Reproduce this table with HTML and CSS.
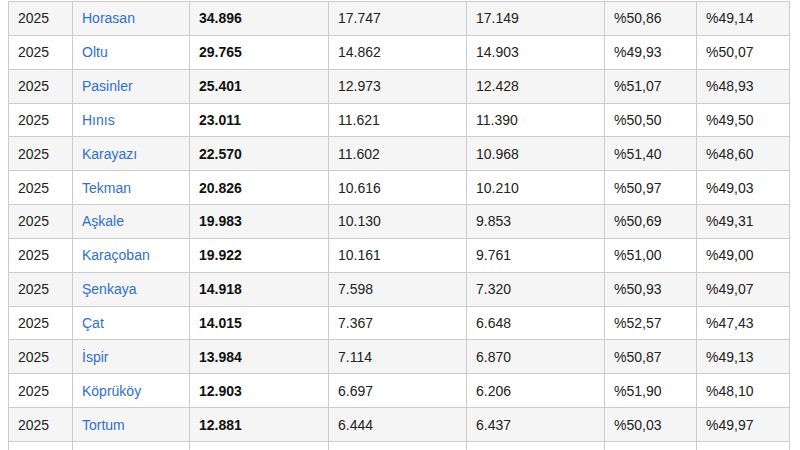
FILE: index.html
```html
<!DOCTYPE html>
<html lang="tr">
<head>
<meta charset="utf-8">
<title>Nüfus</title>
<link rel="stylesheet" href="styles.css">
</head>
<body>
<table class="pop">
<colgroup>
<col class="c1"><col class="c2"><col class="c3"><col class="c4"><col class="c5"><col class="c6"><col class="c7">
</colgroup>
<tbody>
<tr><td>2025</td><td><a href="#">Horasan</a></td><td class="b">34.896</td><td>17.747</td><td>17.149</td><td>%50,86</td><td>%49,14</td></tr>
<tr><td>2025</td><td><a href="#">Oltu</a></td><td class="b">29.765</td><td>14.862</td><td>14.903</td><td>%49,93</td><td>%50,07</td></tr>
<tr><td>2025</td><td><a href="#">Pasinler</a></td><td class="b">25.401</td><td>12.973</td><td>12.428</td><td>%51,07</td><td>%48,93</td></tr>
<tr><td>2025</td><td><a href="#">Hınıs</a></td><td class="b">23.011</td><td>11.621</td><td>11.390</td><td>%50,50</td><td>%49,50</td></tr>
<tr><td>2025</td><td><a href="#">Karayazı</a></td><td class="b">22.570</td><td>11.602</td><td>10.968</td><td>%51,40</td><td>%48,60</td></tr>
<tr><td>2025</td><td><a href="#">Tekman</a></td><td class="b">20.826</td><td>10.616</td><td>10.210</td><td>%50,97</td><td>%49,03</td></tr>
<tr><td>2025</td><td><a href="#">Aşkale</a></td><td class="b">19.983</td><td>10.130</td><td>9.853</td><td>%50,69</td><td>%49,31</td></tr>
<tr><td>2025</td><td><a href="#">Karaçoban</a></td><td class="b">19.922</td><td>10.161</td><td>9.761</td><td>%51,00</td><td>%49,00</td></tr>
<tr><td>2025</td><td><a href="#">Şenkaya</a></td><td class="b">14.918</td><td>7.598</td><td>7.320</td><td>%50,93</td><td>%49,07</td></tr>
<tr><td>2025</td><td><a href="#">Çat</a></td><td class="b">14.015</td><td>7.367</td><td>6.648</td><td>%52,57</td><td>%47,43</td></tr>
<tr><td>2025</td><td><a href="#">İspir</a></td><td class="b">13.984</td><td>7.114</td><td>6.870</td><td>%50,87</td><td>%49,13</td></tr>
<tr><td>2025</td><td><a href="#">Köprüköy</a></td><td class="b">12.903</td><td>6.697</td><td>6.206</td><td>%51,90</td><td>%48,10</td></tr>
<tr><td>2025</td><td><a href="#">Tortum</a></td><td class="b">12.881</td><td>6.444</td><td>6.437</td><td>%50,03</td><td>%49,97</td></tr>
<tr><td>2025</td><td><a href="#">Narman</a></td><td class="b">12.145</td><td>6.190</td><td>5.955</td><td>%50,97</td><td>%49,03</td></tr>
</tbody>
</table>
</body>
</html>
```
FILE: styles.css
```css
html, body {
  margin: 0;
  padding: 0;
  background: #ffffff;
}
body {
  padding: 1px 0 0 8px;
  font-family: "Liberation Sans", Arial, sans-serif;
  font-size: 14px;
  color: #222222;
}
.pop {
  border-collapse: collapse;
  table-layout: fixed;
  width: 781px;
}
.c1 { width: 64px; }
.c2 { width: 117px; }
.c3 { width: 139px; }
.c4 { width: 138px; }
.c5 { width: 138px; }
.c6 { width: 92px; }
.c7 { width: 93px; }
.pop td {
  border: 1px solid #cccccc;
  height: 33.85px;
  padding: 0 0 0 9px;
  box-sizing: border-box;
  vertical-align: middle;
  white-space: nowrap;
  line-height: 16px;
}
.pop tr:nth-child(odd) td {
  background: #f5f5f5;
}
.pop a {
  color: #2f6fcf;
  text-decoration: none;
}
.pop .b {
  font-weight: bold;
  color: #111111;
}
```
